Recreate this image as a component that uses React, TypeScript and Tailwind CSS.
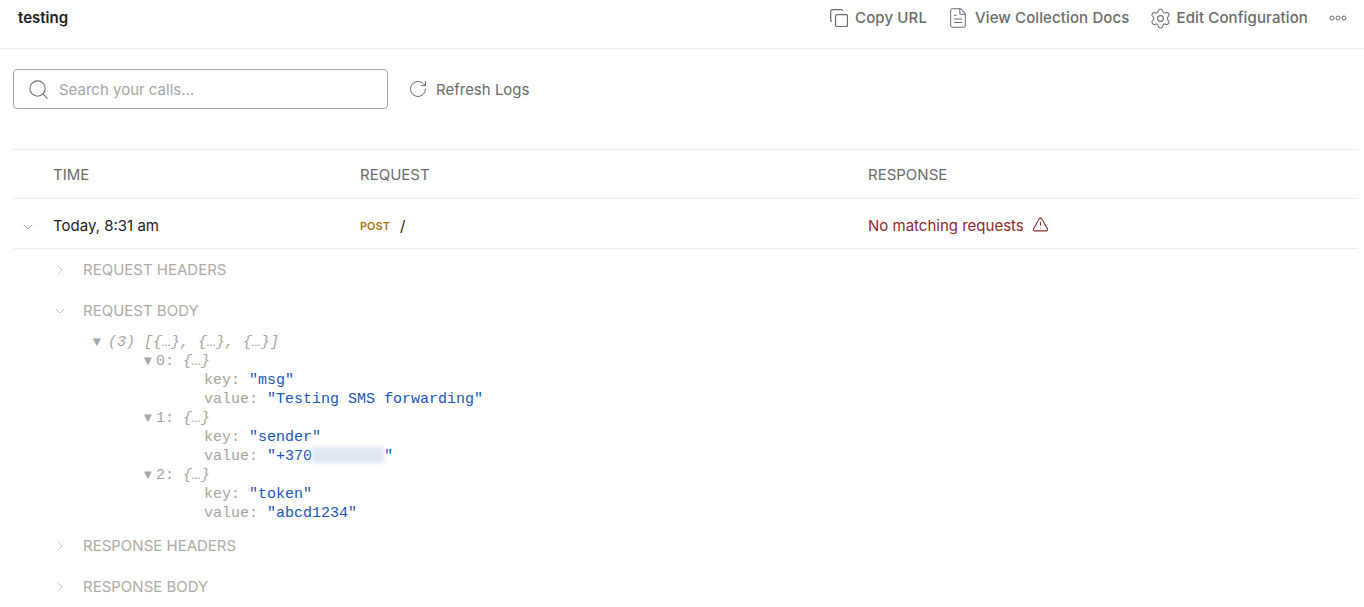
import React from 'react';
import { ChevronDown, ChevronRight, FileText, RotateCw, Search, Settings, TriangleAlert } from 'lucide-react';

function Section({ title, open, children }: { title: string; open?: boolean; children?: React.ReactNode }) {
  return (
    <div>
      <div className="h-[41px] flex items-center text-[#b0aaa6]">
        <div className="w-[83px] pl-[52px] shrink-0">
          {open ? (
            <ChevronDown className="w-[16px] h-[16px] text-[#a6a6a6]" strokeWidth={1} />
          ) : (
            <ChevronRight className="w-[16px] h-[16px] text-[#a6a6a6]" strokeWidth={1} />
          )}
        </div>
        <span className="pt-[2px]">{title}</span>
      </div>
      {children}
    </div>
  );
}

function Arrow() {
  return <span className="inline-block w-[12px] text-[10px] text-[#a6a6a6] align-[1px] font-['DejaVu_Sans']">▼</span>;
}

function Entry({ k, v }: { k: string; v: React.ReactNode }) {
  return (
    <div className="pl-[204px] pt-[1px] h-[19px] whitespace-pre">
      <span className="text-[#a8a3a0]">{k}: </span>
      <span className="text-[#1a55b8]">{v}</span>
    </div>
  );
}

function Item({ n }: { n: number }) {
  return (
    <div className="pl-[144px] h-[19px] whitespace-pre text-[#a8a3a0]">
      <Arrow />
      {n}: <i className="text-[#aaa59f]">{'{…}'}</i>
    </div>
  );
}

export default function App() {
  return (
    <div className="w-[1364px] h-[607px] overflow-hidden bg-white font-['Inter','Liberation_Sans',sans-serif] text-[15px]">
      <header className="h-[49px] border-b border-[#ededed] flex items-center justify-between pl-[18px] pr-[17px] pb-[12px]">
        <span className="font-semibold text-[#212121]">testing</span>
        <div className="flex items-center font-medium text-[#6b6b6b] tracking-[0.12px]">
          <button className="flex items-center gap-[7px] mr-[20px]">
            <svg width="18" height="18" viewBox="0 0 18 18" fill="none" stroke="#6b6b6b" strokeWidth="1.25">
              <rect x="5.5" y="5.5" width="12" height="12" rx="1.5" />
              <path d="M2 12.5 A1.5 1.5 0 0 1 .7 11 V2.5 A1.5 1.5 0 0 1 2.5 .7 H11 A1.5 1.5 0 0 1 12.5 2" />
            </svg>
            Copy URL
          </button>
          <button className="flex items-center gap-[6px] mr-[19px]">
            <FileText className="w-[22px] h-[22px]" strokeWidth={1.1} />
            View Collection Docs
          </button>
          <button className="flex items-center gap-[5px] mr-[21px]">
            <Settings className="w-[23px] h-[23px]" strokeWidth={1.1} />
            Edit Configuration
          </button>
          <svg width="18" height="6" viewBox="0 0 18 6" fill="none" stroke="#6b6b6b" strokeWidth="1">
            <circle cx="3" cy="3" r="2" />
            <circle cx="9" cy="3" r="2" />
            <circle cx="15" cy="3" r="2" />
          </svg>
        </div>
      </header>

      <div className="pl-[13px] pr-[6px]">
        <div className="h-[100px] pt-[20px] flex items-start">
          <div className="w-[375px] h-[40px] border border-[#a6a6a6] rounded-[4px] flex items-center pl-[13px] gap-[9px]">
            <Search className="w-[23px] h-[23px] text-[#6b6b6b]" strokeWidth={1.1} />
            <span className="text-[#a6a6a6] pt-[2px]">Search your calls...</span>
          </div>
          <button className="h-[40px] ml-[20px] flex items-center gap-[8px] text-[#6b6b6b]">
            <RotateCw className="w-[20px] h-[20px]" strokeWidth={1.2} />
            <span className="pt-[2px]">Refresh Logs</span>
          </button>
        </div>

        <div className="h-[50px] border-t border-b border-[#ededed] flex items-center text-[#6b6b6b] pt-[2px]">
          <div className="w-[347px] pl-[40px]">TIME</div>
          <div className="w-[508px]">REQUEST</div>
          <div>RESPONSE</div>
        </div>

        <div className="h-[50px] border-b border-[#ededed] flex items-center text-[#212121] pt-[6px]">
          <div className="w-[347px] flex items-center">
            <div className="w-[40px] pl-[7px]">
              <ChevronDown className="w-[16px] h-[16px] text-[#6b6b6b]" strokeWidth={1} />
            </div>
            Today, 8:31 am
          </div>
          <div className="w-[508px] flex items-center">
            <span className="text-[11px] font-semibold text-[#a8781c] mr-[10px]">POST</span>/
          </div>
          <div className="flex items-center gap-[8px] text-[#8b2a2a]">
            No matching requests
            <TriangleAlert className="w-[17px] h-[17px] mb-[5px]" strokeWidth={1.5} />
          </div>
        </div>
      </div>

      <Section title="REQUEST HEADERS" />
      <Section title="REQUEST BODY" open>
        <div className="font-['Liberation_Mono',monospace] text-[15px] leading-[19px] pt-[1px] pb-[3px]">
          <div className="pl-[93px] h-[19px] whitespace-pre text-[#aaa59f]">
            <Arrow />
            <i className="ml-[3px]">(3) [{'{…}'}, {'{…}'}, {'{…}'}]</i>
          </div>
          <Item n={0} />
          <Entry k="key" v={'"msg"'} />
          <Entry k="value" v={'"Testing SMS forwarding"'} />
          <Item n={1} />
          <Entry k="key" v={'"sender"'} />
          <Entry
            k="value"
            v={
              <>
                "+370
                <span className="inline-block w-[72px] h-[16px] align-[-3px] bg-[#dfe7f3] blur-[2px]" />"
              </>
            }
          />
          <Item n={2} />
          <Entry k="key" v={'"token"'} />
          <Entry k="value" v={'"abcd1234"'} />
        </div>
      </Section>
      <Section title="RESPONSE HEADERS" />
      <Section title="RESPONSE BODY" />
    </div>
  );
}
